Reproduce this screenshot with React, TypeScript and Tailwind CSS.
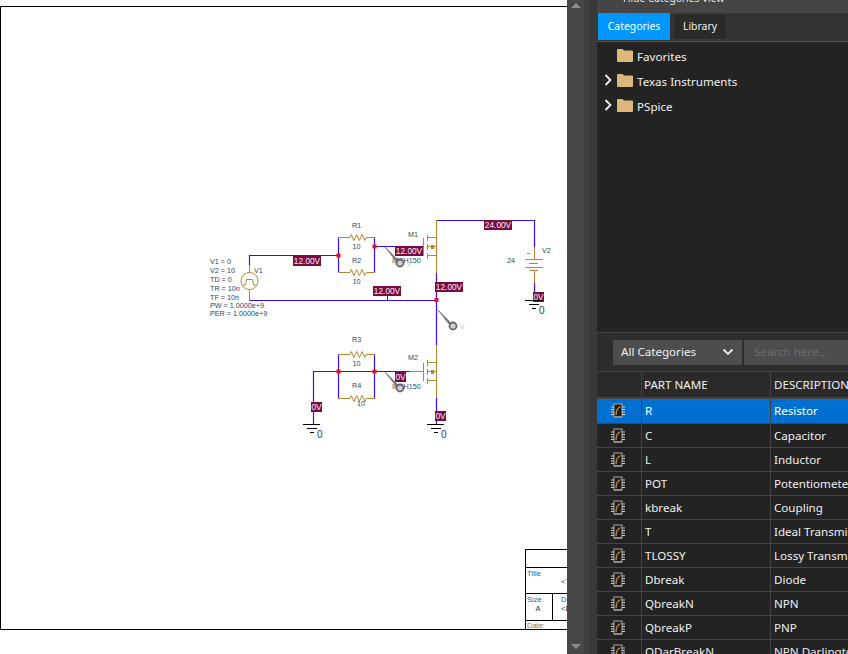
import React from "react";

const FONT = { fontFamily: '"Noto Sans", "Open Sans", sans-serif' };
const WIRE = "#3a0cf5";
const PART = "#b8862e";

function Chip() {
  return (
    <svg width="14" height="16" viewBox="0 0 14 16" className="block">
      <rect x="3" y="1" width="8" height="13" fill="#1c1c1c" stroke="#a8a8a8" />
      <rect x="3" y="13" width="8" height="2" fill="#8a8a8a" />
      <path d="M0 4h3M0 6.500h3M0 9h3M0 11.500h3M11 4h3M11 6.500h3M11 9h3M11 11.500h3" stroke="#d0d0d0" />
      <path d="M5 12c0-4 1.500-7 4.500-8.500" fill="none" stroke="#d89a2a" strokeWidth="1.200" />
    </svg>
  );
}

function Folder() {
  return (
    <svg width="16" height="13" viewBox="0 0 16 13" className="block">
      <path d="M0 1a1 1 0 0 1 1-1h4.500L7 1.500h8a1 1 0 0 1 1 1V12a1 1 0 0 1-1 1H1a1 1 0 0 1-1-1z" fill="#dcb97a" />
    </svg>
  );
}

function Caret() {
  return (
    <svg width="9" height="12" viewBox="0 0 9 12" className="block -mt-[3px]">
      <path d="M1.500 1 6.500 6l-5 5" fill="none" stroke="#f0f0f0" strokeWidth="1.800" />
    </svg>
  );
}

function Res({ x, y }: { x: number; y: number }) {
  return (
    <path
      d={`M${x} ${y}h11l1.300-3 2.700 6 2.700-6 2.700 6 2.700-6 2.700 6 1.400-3h9`}
      fill="none"
      stroke={PART}
    />
  );
}

function Label({ x, y, w, t }: { x: number; y: number; w: number; t: string }) {
  return (
    <g>
      <rect x={x} y={y} width={w} height="10" fill="#7a0a42" />
      <text x={x + w / 2} y={y + 8.200} fontSize="8.300" fill="#f4f4f4" textAnchor="middle">
        {t}
      </text>
    </g>
  );
}

function Ground({ x, y }: { x: number; y: number }) {
  return (
    <g>
      <path
        d={`M${x - 9} ${y + 0.500}h17M${x - 5} ${y + 4.500}h10M${x - 2} ${y + 8.500}h4`}
        stroke="#000"
        shapeRendering="crispEdges"
      />
      <text x={x + 5} y={y + 14} fontSize="10" fill="#17406c">
        0
      </text>
    </g>
  );
}

function Probe({ x, y }: { x: number; y: number }) {
  return (
    <g>
      <path d={`M${x - 15} ${y - 16}L${x - 3} ${y - 4}L${x - 1} ${y - 1}L${x - 4} ${y - 2}z`} fill="#777" stroke="#777" strokeWidth="0.800" />
      <circle cx={x} cy={y} r="3.500" fill="#cfcfcf" stroke="#666" strokeWidth="1.800" />
      <text x={x + 7} y={y + 2.500} fontSize="6.500" fill="#bdbdbd">
        V
      </text>
    </g>
  );
}

function Mosfet({ x, y }: { x: number; y: number }) {
  // x = gate bar, y = middle lead
  return (
    <g stroke={PART} fill="none" shapeRendering="crispEdges">
      <path d={`M${x} ${y - 9}v18`} />
      <path d={`M${x + 4} ${y - 12}v6M${x + 4} ${y - 3}v6M${x + 4} ${y + 6}v6`} />
      <path d={`M${x + 4} ${y - 9}h9M${x + 4} ${y}h9M${x + 4} ${y + 9}h9M${x + 13} ${y - 9}v18`} />
      <path d={`M${x + 8} ${y - 1.500}h2v3h-2z`} fill={PART} />
    </g>
  );
}

function Schematic() {
  return (
    <svg
      className="absolute left-0 top-0"
      width="567"
      height="654"
      viewBox="0 0 567 654"
      style={{ fontFamily: '"Liberation Sans", Arial, sans-serif' }}
    >
      <g stroke={WIRE} fill="none" strokeWidth="1.200">
        <path d="M249.500 265v-9.500h89M249.500 300.500h187" />
        <path d="M338.500 237.500v35M374.500 237.500v35M374.500 246.500h24" />
        <path d="M436.500 273v72M436.500 220.500H534.500v27M534.500 283v10" />
        <path d="M313.500 424v-52.500h97M338.500 354.500v44M374.500 354.500v44M436.500 398v26" />
      </g>
      <path d="M387.500 296v4" stroke="#7a0a42" shapeRendering="crispEdges" />
      <Res x={339} y={237.5} />
      <Res x={339} y={272.5} />
      <Res x={339} y={354.5} />
      <Res x={339} y={398.5} />
      <g fill="#ee1111">
        <rect x="336.500" y="253.500" width="4" height="4" />
        <rect x="372.500" y="244.500" width="4" height="4" />
        <rect x="434.500" y="298" width="4" height="4" />
        <rect x="336.500" y="369.500" width="4" height="4" />
        <rect x="372.500" y="369.500" width="4" height="4" />
      </g>
      <g fontSize="7.200" fill="#2a4664">
        <text x="352" y="228">R1</text>
        <text x="352.500" y="249">10</text>
        <text x="352" y="263">R2</text>
        <text x="352.500" y="284">10</text>
        <text x="352" y="342">R3</text>
        <text x="352.500" y="366">10</text>
        <text x="352" y="388">R4</text>
        <text x="357" y="406">10</text>
        <text x="408" y="237">M1</text>
        <text x="408" y="360">M2</text>
        <text x="392" y="263">IRFH150</text>
        <text x="392" y="389">IRFH150</text>
        <text x="542" y="253">V2</text>
        <text x="507" y="263">24</text>
        <text x="254" y="273">V1</text>
        <text x="210" y="264">V1 = 0</text>
        <text x="210" y="273">V2 = 10</text>
        <text x="210" y="282">TD = 0</text>
        <text x="210" y="291">TR = 10n</text>
        <text x="210" y="300">TF = 10n</text>
        <text x="210" y="308">PW = 1.0000e+9</text>
        <text x="210" y="316">PER = 1.0000e+9</text>
      </g>
      <g fill="none" stroke={PART}>
        <circle cx="249.500" cy="281" r="8.500" />
        <path d="M249.500 265v8M249.500 289v11M243 285h2.500l1-5.500h6l1 5.500h2.500" />
        <path
          d="M534.500 247v12M525 259.500h18M529 263.500h9M525 267.500h18M530 270.500h8M534.500 270.500V283M527 253.500h3"
          shapeRendering="crispEdges"
        />
        <path
          d="M398 246.500h25M410 371.500h13M436.500 220v17M436.500 255v18M436.500 345v17M436.500 380v18"
          shapeRendering="crispEdges"
        />
      </g>
      <Mosfet x={423.5} y={246.5} />
      <Mosfet x={423.5} y={371.5} />
      <Probe x={400} y={263} />
      <Probe x={453} y={326} />
      <Probe x={400} y={388} />
      <Label x={293} y={256} w={28} t="12.00V" />
      <Label x={373} y={286} w={28} t="12.00V" />
      <Label x={395} y={246} w={28} t="12.00V" />
      <Label x={435} y={282} w={28} t="12.00V" />
      <Label x={484} y={220} w={28} t="24.00V" />
      <Label x={533} y={292} w={11} t="0V" />
      <Label x={395} y={372} w={11} t="0V" />
      <Label x={311} y={402} w={11} t="0V" />
      <Label x={435} y={411} w={11} t="0V" />
      <Ground x={534} y={300} />
      <Ground x={312} y={424} />
      <Ground x={436} y={424} />
    </svg>
  );
}

function TitleBlock() {
  return (
    <div
      className="absolute left-[525px] top-[549px] w-[60px] h-[81px] border-l border-t border-black text-[7.500px] leading-[9px] text-[#1c5fa8]"
      style={{ fontFamily: '"Liberation Sans", Arial, sans-serif' }}
    >
      <div className="h-[18px] border-b border-black" />
      <div className="h-[26px] border-b border-black relative pl-[1px] pt-[1px]">
        Title
        <span className="absolute left-[35px] top-[9px] text-[#333]">&lt;T</span>
      </div>
      <div className="h-[27px] border-b border-black flex">
        <div className="w-[27px] border-r border-black pl-[1px] pt-[1px]">
          Size
          <div className="text-center text-[#333] pr-[3px]">A</div>
        </div>
        <div className="pl-[8px] pt-[1px]">
          De
          <div className="text-[#333]">&lt;D</div>
        </div>
      </div>
      <div className="pl-[1px] text-[#b8662e]">Date:</div>
    </div>
  );
}

const ROWS: [string, string][] = [
  ["R", "Resistor"],
  ["C", "Capacitor"],
  ["L", "Inductor"],
  ["POT", "Potentiometer"],
  ["kbreak", "Coupling"],
  ["T", "Ideal Transmission Line"],
  ["TLOSSY", "Lossy Transmission Line"],
  ["Dbreak", "Diode"],
  ["QbreakN", "NPN"],
  ["QbreakP", "PNP"],
  ["QDarBreakN", "NPN Darlington"],
];

function Tree({ label, caret }: { label: string; caret?: boolean }) {
  return (
    <div className="h-[25px] flex items-center text-[#f0f0f0]">
      <div className="w-[20px] flex pl-[7px]">{caret ? <Caret /> : null}</div>
      <div className="-mt-[2px]">
        <Folder />
      </div>
      <span className="ml-[4px]">{label}</span>
    </div>
  );
}

export default function App() {
  return (
    <div className="relative w-[848px] h-[654px] overflow-hidden bg-white flex" style={FONT}>
      <div className="relative w-[567px] h-full shrink-0">
        <div className="absolute left-0 top-[6px] w-[600px] h-[624px] border border-black" />
        <Schematic />
        <TitleBlock />
      </div>

      {/* Scrollbar strips */}
      <div className="relative z-10 w-[17px] shrink-0 h-full bg-[#474747] flex flex-col items-center justify-between pt-[3px] pb-[5px]">
        <div className="w-0 h-0 border-x-[5px] border-x-transparent border-b-[5px] border-b-[#8c8c8c]" />
        <div className="w-0 h-0 border-x-[5px] border-x-transparent border-t-[5px] border-t-[#8c8c8c]" />
      </div>
      <div className="relative z-10 w-[6px] shrink-0 h-full bg-[#3f3f3f]" />
      <div className="relative z-10 w-[7px] shrink-0 h-full bg-[#393939]" />

      {/* Right panel */}
      <div className="relative z-10 flex-1 min-w-0 h-full bg-[#333] flex flex-col text-[11.600px] text-[#f0f0f0]">
        <div className="h-[13px] shrink-0 bg-[#454545] overflow-hidden relative">
          <span className="absolute left-[11px] top-[-12px] text-[11px] text-[#e4e4e4] whitespace-nowrap">▸</span>
          <span className="absolute left-[26px] top-[-9px] text-[10.200px] leading-[14px] text-[#e4e4e4] whitespace-nowrap">
            Hide Categories View
          </span>
        </div>
        <div className="h-[29px] shrink-0 flex items-stretch bg-[#333] border-b border-[#565656] pl-[1px] pb-[1px]">
          <div className="w-[72px] flex items-center justify-center bg-[#0098ff] text-white text-[10.400px]">
            Categories
          </div>
          <div className="ml-[3px] w-[54px] flex items-center justify-center bg-[#2a2a2a] border border-[#3a3a3a] text-[10.400px]">
            Library
          </div>
        </div>
        <div className="h-[290px] shrink-0 bg-[#222322] pt-[2px]">
          <Tree label="Favorites" />
          <Tree label="Texas Instruments" caret />
          <Tree label="PSpice" caret />
        </div>
        <div className="h-[40px] shrink-0 bg-[#2d2d2d] border-y border-[#444] flex items-center pl-[16px]">
          <div className="w-[129px] h-[25px] bg-[#4d4d4d] flex items-center justify-between pl-[8px] pr-[8px]">
            <span>All Categories</span>
            <svg width="12" height="8" viewBox="0 0 12 8" className="block">
              <path d="M1.500 1.500 6 6l4.500-4.500" fill="none" stroke="#eee" strokeWidth="1.800" />
            </svg>
          </div>
          <div className="ml-[2px] flex-1 h-[25px] bg-[#4d4d4d] flex items-center pl-[10px] text-[#6e6e6e] overflow-hidden whitespace-nowrap">
            Search here...
          </div>
        </div>
        <div className="flex-1 min-h-0 bg-[#222322] overflow-hidden">
          <div className="h-[27px] flex items-center border-b-[2px] border-[#444] bg-[#2a2a2a]">
            <div className="w-[45px] shrink-0 h-full border-r border-[#444]" />
            <div className="w-[129px] shrink-0 h-full border-r border-[#444] flex items-center pl-[2px]">PART NAME</div>
            <div className="flex-1 pl-[3px] whitespace-nowrap overflow-hidden">DESCRIPTION</div>
          </div>
          {ROWS.map(([n, d], i) => (
            <div
              key={n}
              className={
                i === 0
                  ? "h-[25px] flex items-center border-b border-[#444] bg-[#006fd0] text-white"
                  : "h-[24px] flex items-center border-b border-[#444]"
              }
            >
              <div className="w-[45px] shrink-0 h-full border-r border-[#444] flex items-center justify-center pr-[2px]">
                <Chip />
              </div>
              <div className="w-[129px] shrink-0 h-full border-r border-[#444] flex items-center pl-[3px]">{n}</div>
              <div className="flex-1 pl-[3px] whitespace-nowrap overflow-hidden">{d}</div>
            </div>
          ))}
        </div>
      </div>
    </div>
  );
}
